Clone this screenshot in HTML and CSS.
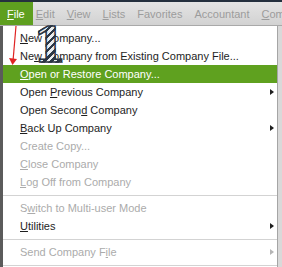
FILE: index.html
```html
<!DOCTYPE html>
<html lang="en">
<head>
  <meta charset="UTF-8">
  <title>File Menu</title>
  <link rel="stylesheet" href="styles.css">
</head>
<body>

  <div class="window">
    <div class="menubar">
      <span class="menu-item active"><u>F</u>ile</span>
      <span class="menu-item"><u>E</u>dit</span>
      <span class="menu-item"><u>V</u>iew</span>
      <span class="menu-item"><u>L</u>ists</span>
      <span class="menu-item">Favorites</span>
      <span class="menu-item">Accountant</span>
      <span class="menu-item"><u>C</u>ompany</span>
    </div>

    <div class="dropdown">
      <div class="row"><u>N</u>ew Company...</div>
      <div class="row">Ne<u>w</u> Company from Existing Company File...</div>
      <div class="row selected"><u>O</u>pen or Restore Company...</div>
      <div class="row sub">Open <u>P</u>revious Company</div>
      <div class="row">Open Secon<u>d</u> Company</div>
      <div class="row sub"><u>B</u>ack Up Company</div>
      <div class="row disabled">Create Copy...</div>
      <div class="row disabled"><u>C</u>lose Company</div>
      <div class="row disabled"><u>L</u>og Off from Company</div>
      <div class="sep"></div>
      <div class="row disabled">S<u>w</u>itch to Multi-user Mode</div>
      <div class="row sub"><u>U</u>tilities</div>
      <div class="sep"></div>
      <div class="row disabled sub">Send Company F<u>i</u>le</div>
      <div class="sep"></div>
    </div>

    <span class="step">1</span>
    <svg class="arrow" width="20" height="44" viewBox="0 0 20 44">
      <line x1="8" y1="1" x2="5" y2="36" stroke="#e02424" stroke-width="1.2"/>
      <polygon points="1,33 9,34 4.5,40" fill="#e02424"/>
    </svg>
  </div>

</body>
</html>
```

FILE: styles.css
```css
* {
  box-sizing: border-box;
}

body {
  margin: 0;
  background: #d9d9d9;
  font-family: "Liberation Sans", Arial, sans-serif;
  font-size: 11px;
}

.window {
  position: relative;
  width: 282px;
  height: 267px;
  overflow: hidden;
}

.menubar {
  display: flex;
  align-items: stretch;
  height: 26px;
  border-top: 2px solid #24303e;
  border-bottom: 1px solid #a9a9a9;
  background: linear-gradient(to bottom, #e4e4e4, #d2d2d2);
  white-space: nowrap;
}

.menu-item {
  display: flex;
  align-items: center;
  margin-right: 12px;
  color: #9c9c9c;
}

.menu-item.active {
  padding: 0 8px 0 7px;
  margin-right: 3px;
  background: #5e9f1f;
  color: #fff;
}

.dropdown {
  width: 278px;
  padding-top: 3px;
  background: #fff;
  border-left: 3px solid #5b5b5b;
  border-right: 1px solid #a5a5a5;
}

.row {
  position: relative;
  height: 18px;
  line-height: 18px;
  padding-left: 17px;
  color: #1e1e1e;
  white-space: nowrap;
}

.row.selected {
  background: #5fa11f;
  color: #fff;
}

.row.disabled {
  color: #ababab;
}

.row.sub::after {
  content: "";
  position: absolute;
  right: 3px;
  top: 6px;
  border-left: 4px solid #1e1e1e;
  border-top: 3.5px solid transparent;
  border-bottom: 3.5px solid transparent;
}

.row.disabled.sub::after {
  border-left-color: #b5b5b5;
}

.sep {
  height: 8px;
  padding-top: 4px;
}

.sep::before {
  content: "";
  display: block;
  height: 1px;
  background: #d3d3d3;
}

.step {
  position: absolute;
  left: 33px;
  top: 21px;
  font-family: "DejaVu Serif", serif;
  font-weight: bold;
  font-size: 48px;
  line-height: 1;
  color: transparent;
  background: repeating-linear-gradient(135deg, #2c3947 0 2.5px, #e8ecf0 2.5px 5px);
  -webkit-background-clip: text;
  background-clip: text;
  -webkit-text-stroke: 1.5px #2a3442;
}

.arrow {
  position: absolute;
  left: 8px;
  top: 25px;
}
```
